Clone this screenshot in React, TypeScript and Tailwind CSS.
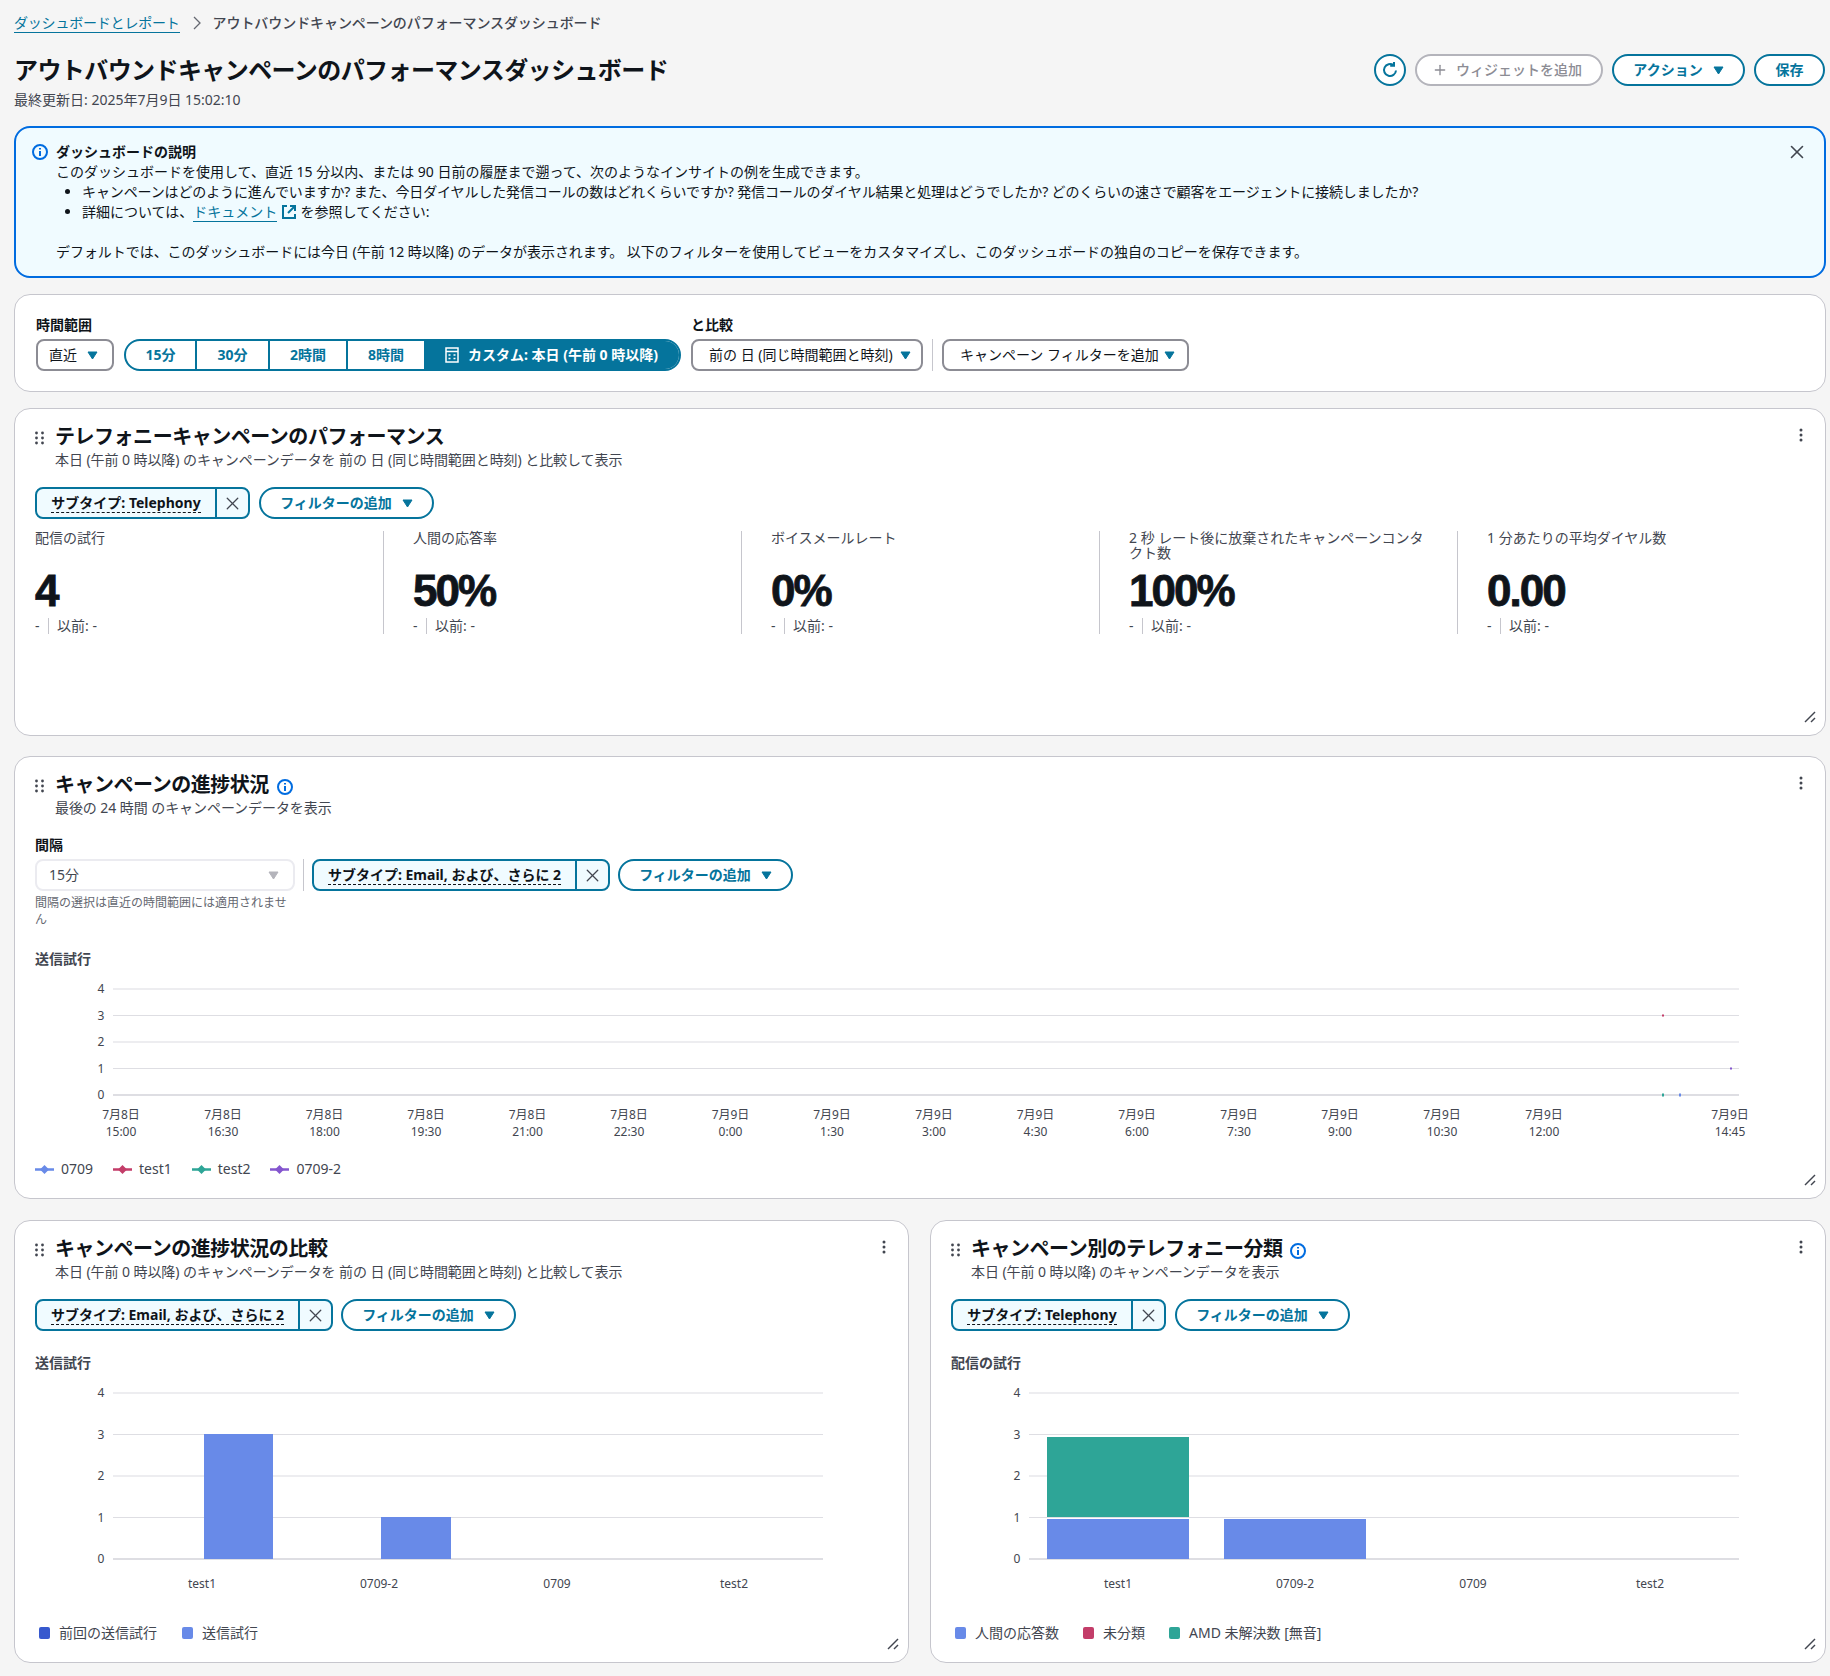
import { ReactNode } from "react";
import { Plus, X } from "lucide-react";

const teal = "#05749c";

const Caret = ({ className = "text-[#05749c]" }: { className?: string }) => (
  <svg width="11" height="9" viewBox="0 0 11 9" className={className}>
    <path d="M1 1h9L5.5 8z" fill="currentColor" stroke="currentColor" strokeLinejoin="round" />
  </svg>
);

const InfoIcon = ({ size = 16 }: { size?: number }) => (
  <svg width={size} height={size} viewBox="0 0 16 16" fill="none" stroke="#006ce0" strokeWidth="2" className="shrink-0">
    <circle cx="8" cy="8" r="7" />
    <path d="M8 7v5" />
    <path d="M8 4v1.6" />
  </svg>
);

const DragIcon = () => (
  <svg width="9" height="14" viewBox="0 0 9 14" fill="#424650" className="mt-[2px] shrink-0">
    <circle cx="1.5" cy="2" r="1.4" />
    <circle cx="7.5" cy="2" r="1.4" />
    <circle cx="1.5" cy="7" r="1.4" />
    <circle cx="7.5" cy="7" r="1.4" />
    <circle cx="1.5" cy="12" r="1.4" />
    <circle cx="7.5" cy="12" r="1.4" />
  </svg>
);

const ExternalIcon = () => (
  <svg width="16" height="16" viewBox="0 0 16 16" fill="none" stroke={teal} strokeWidth="2" className="inline-block align-[-3px]">
    <path d="M6 2H2v12h12v-4" />
    <path d="M9 2h5v5" />
    <path d="M14 2L7 9" />
  </svg>
);

const CalendarIcon = () => (
  <svg width="14" height="16" viewBox="0 0 14 16" fill="none" stroke="white" strokeWidth="1.5" className="shrink-0">
    <rect x="1" y="1" width="12" height="14" />
    <path d="M1 4.5h12" />
    <path d="M3.5 8h2M8.5 8h2M3.5 11.5h2M8.5 11.5h2" />
  </svg>
);

const PillButton = ({ children, className = "" }: { children: ReactNode; className?: string }) => (
  <button className={`flex h-8 items-center justify-center gap-[10px] rounded-full border-2 border-[#05749c] bg-white text-sm font-bold text-[#05749c] ${className}`}>
    {children}
  </button>
);

const Dropdown = ({ label, className = "" }: { label: string; className?: string }) => (
  <div className={`flex h-8 items-center justify-between rounded-lg border-2 border-[#8c8c94] bg-white text-sm text-[#0f141a] ${className}`}>
    <span>{label}</span>
    <Caret />
  </div>
);

const FilterChips = ({ label, chipClass, gapClass }: { label: string; chipClass: string; gapClass: string }) => (
  <div className={`flex ${gapClass}`}>
    <div className={`flex h-8 items-stretch rounded-lg border-2 border-[#05749c] bg-[#f0fbff] ${chipClass}`}>
      <div className="flex flex-1 items-center justify-center border-r-2 border-[#05749c]">
        <span className="border-b border-dashed border-[#0f141a] text-sm font-bold leading-[19px] text-[#0f141a]">{label}</span>
      </div>
      <div className="flex w-[31px] items-center justify-center">
        <X size={21} strokeWidth={1.5} color="#424650" />
      </div>
    </div>
    <PillButton className="w-[175px]">
      フィルターの追加
      <Caret />
    </PillButton>
  </div>
);

const Card = ({ title, sub, info, className = "", children }: { title: string; sub: string; info?: boolean; className?: string; children: ReactNode }) => (
  <section className={`relative rounded-2xl border border-[#c6c6cd] bg-white px-5 pt-[14px] ${className}`}>
    <div className="flex h-7 items-center">
      <DragIcon />
      <h2 className="ml-[11px] text-xl font-bold leading-7 tracking-[-0.47px] text-[#0f141a]">{title}</h2>
      {info && <span className="ml-2 mt-[3px]"><InfoIcon /></span>}
    </div>
    <p className="-mt-px ml-[20px] h-[21px] text-sm leading-5 tracking-[-0.07px] text-[#424650]">{sub}</p>
    {children}
    <svg width="4" height="14" viewBox="0 0 4 14" fill="#424650" className="absolute right-[22px] top-[19px]">
      <circle cx="2" cy="2" r="1.5" />
      <circle cx="2" cy="7" r="1.5" />
      <circle cx="2" cy="12" r="1.5" />
    </svg>
    <svg width="12" height="12" viewBox="0 0 12 12" fill="none" stroke="#424650" strokeWidth="1.5" className="absolute bottom-[12px] right-[9px]">
      <path d="M1 11L11 1" />
      <path d="M7 11l4-4" />
    </svg>
  </section>
);

const kpis = [
  { label: "配信の試行", value: "4" },
  { label: "人間の応答率", value: "50%" },
  { label: "ボイスメールレート", value: "0%" },
  { label: "2 秒 レート後に放棄されたキャンペーンコンタクト数", value: "100%" },
  { label: "1 分あたりの平均ダイヤル数", value: "0.00" },
];

const yTicks = [4, 3, 2, 1, 0];
const axisText = { fontSize: 12, fill: "#424650" };

const xLabels = [
  ["7月8日", "15:00", 121], ["7月8日", "16:30", 223], ["7月8日", "18:00", 324.5], ["7月8日", "19:30", 426],
  ["7月8日", "21:00", 527.5], ["7月8日", "22:30", 629], ["7月9日", "0:00", 730.5], ["7月9日", "1:30", 832],
  ["7月9日", "3:00", 934], ["7月9日", "4:30", 1035.5], ["7月9日", "6:00", 1137], ["7月9日", "7:30", 1239],
  ["7月9日", "9:00", 1340], ["7月9日", "10:30", 1442], ["7月9日", "12:00", 1544], ["7月9日", "14:45", 1730],
] as const;

const LineChart = () => {
  // coordinates are relative to the inner left edge of the card (x=35, y=975)
  const ys = [14, 40.5, 67, 93.5, 120];
  return (
    <svg width="1770" height="170" className="mt-[6px] block">
      {ys.map((y, i) => (
        <g key={y}>
          <line x1="78" x2="1704" y1={y} y2={y} stroke={i === 4 ? "#dedee3" : i % 2 ? "#dedee3" : "#ededf0"} strokeWidth={i % 2 ? 1 : 2} />
          <text x="66" y={y + 4} textAnchor="middle" {...axisText}>{yTicks[i]}</text>
        </g>
      ))}
      {xLabels.map(([d, t, x]) => (
        <g key={t}>
          <text x={x - 35} y="144" textAnchor="middle" {...axisText}>{d}</text>
          <text x={x - 35} y="161" textAnchor="middle" {...axisText}>{t}</text>
        </g>
      ))}
      <rect x="1627" y="39.5" width="2" height="2" fill="#c33d69" />
      <rect x="1695" y="92.5" width="2" height="2" fill="#8456ce" />
      <rect x="1627" y="118.5" width="2" height="3" fill="#2ea597" />
      <rect x="1644" y="118.5" width="2" height="3" fill="#688ae8" />
    </svg>
  );
};

const BarChart = ({ bars }: { bars: { x: number; w: number; top: number; bottom: number; color: string }[] }) => {
  const ys = [14, 55.5, 97, 138.5, 180];
  const cats: [string, number][] = [["test1", 167], ["0709-2", 344], ["0709", 522], ["test2", 699]];
  return (
    <svg width="852" height="221" className="mt-[6px] block">
      {ys.map((y, i) => (
        <g key={y}>
          <line x1="78" x2="788" y1={y} y2={y} stroke={i === 4 ? "#dedee3" : i % 2 ? "#dedee3" : "#ededf0"} strokeWidth={i % 2 ? 1 : 2} />
          <text x="66" y={y + 4} textAnchor="middle" {...axisText}>{yTicks[i]}</text>
        </g>
      ))}
      {bars.map((b) => (
        <rect key={`${b.x}-${b.top}`} x={b.x} y={b.top} width={b.w} height={b.bottom - b.top} fill={b.color} />
      ))}
      {cats.map(([c, x]) => (
        <text key={c} x={x} y="209" textAnchor="middle" {...axisText}>{c}</text>
      ))}
    </svg>
  );
};

const LineLegend = ({ color, label }: { color: string; label: string }) => (
  <div className="flex items-center gap-[7px] text-sm text-[#424650]">
    <svg width="19" height="9" viewBox="0 0 19 9">
      <rect x="0" y="3.25" width="19" height="2.5" fill={color} />
      <path d="M9.5 0L14 4.5L9.5 9L5 4.5z" fill={color} />
    </svg>
    {label}
  </div>
);

const SquareLegend = ({ color, label }: { color: string; label: string }) => (
  <div className="flex items-center gap-[9px] text-sm text-[#424650]">
    <span className={`h-3 w-[11px] rounded-[2px] ${color}`} />
    {label}
  </div>
);

export default function App() {
  return (
    <div className="min-h-[1676px] bg-[#f5f5f5] pb-[13px] pl-[14px] pr-[4px] pt-[13px] font-['Noto_Sans','Noto_Sans_CJK_JP',sans-serif]">
      <nav className="flex h-5 items-center text-sm leading-5">
        <a className="border-b border-[#05749c] leading-[19px] tracking-[-0.2px] text-[#05749c]">ダッシュボードとレポート</a>
        <svg width="10" height="14" viewBox="0 0 10 14" fill="none" stroke="#656871" strokeWidth="1.3" className="ml-3 mr-[11px]">
          <path d="M2 1l6 6-6 6" />
        </svg>
        <span className="font-medium tracking-[-0.08px] text-[#424650]">アウトバウンドキャンペーンのパフォーマンスダッシュボード</span>
      </nav>

      <header className="mt-[21px] flex items-start justify-between">
        <div>
          <h1 className="text-2xl font-bold leading-8 tracking-[-0.58px] text-[#0f141a]">アウトバウンドキャンペーンのパフォーマンスダッシュボード</h1>
          <p className="mt-1 text-sm leading-5 text-[#424650]">最終更新日: 2025年7月9日 15:02:10</p>
        </div>
        <div className="mr-px flex gap-[9px]">
          <button className="flex size-8 items-center justify-center rounded-full border-2 border-[#05749c] bg-white">
            <svg width="18" height="18" viewBox="0 0 18 18" fill="none" stroke={teal} strokeWidth="2">
              <path d="M15 9.5A6 6 0 1 1 12.6 4.2" />
              <path d="M13 1v3.8H9.2" />
            </svg>
          </button>
          <button className="flex h-8 w-[188px] items-center justify-center gap-2 rounded-full border-2 border-[#b4b4bb] bg-white pr-1 text-sm font-medium text-[#8c8c94]">
            <Plus size={16} strokeWidth={2} />
            ウィジェットを追加
          </button>
          <PillButton className="w-[133px]">
            アクション
            <Caret />
          </PillButton>
          <PillButton className="w-[71px]">保存</PillButton>
        </div>
      </header>

      <section className="relative mt-4 h-[152px] rounded-2xl border-2 border-[#006ce0] bg-[#f0fbff] pl-[16px] pt-[14px] text-sm leading-5 text-[#0f141a]">
        <div className="flex gap-2">
          <span className="mt-[2px]"><InfoIcon /></span>
          <div>
            <h3 className="font-bold">ダッシュボードの説明</h3>
            <p>このダッシュボードを使用して、直近 15 分以内、または 90 日前の履歴まで遡って、次のようなインサイトの例を生成できます。</p>
            <ul className="list-disc pl-[26px] [&>li]:h-5">
              <li className="tracking-[-0.12px]">キャンペーンはどのように進んでいますか? また、今日ダイヤルした発信コールの数はどれくらいですか? 発信コールのダイヤル結果と処理はどうでしたか? どのくらいの速さで顧客をエージェントに接続しましたか?</li>
              <li>詳細については、<a className="border-b border-[#05749c] text-[#05749c]">ドキュメント</a> <ExternalIcon /> を参照してください:</li>
            </ul>
            <p className="mt-5 tracking-[-0.05px]">デフォルトでは、このダッシュボードには今日 (午前 12 時以降) のデータが表示されます。 以下のフィルターを使用してビューをカスタマイズし、このダッシュボードの独自のコピーを保存できます。</p>
          </div>
        </div>
        <X size={22} strokeWidth={1.75} color="#424650" className="absolute right-[16px] top-[13px]" />
      </section>

      <section className="mt-4 flex h-[98px] items-end rounded-2xl border border-[#c6c6cd] bg-white pb-5 pl-[21px]">
        <div>
          <label className="block text-sm font-bold leading-5 text-[#0f141a]">時間範囲</label>
          <div className="mt-1 flex gap-[10px]">
            <Dropdown label="直近" className="w-[78px] pl-[11px] pr-[14px]" />
            <div className="flex h-8 w-[557px] overflow-hidden rounded-full border-2 border-[#05749c] bg-white text-sm font-bold text-[#05749c]">
              <span className="flex w-[71px] items-center justify-center border-r-2 border-[#05749c]">15分</span>
              <span className="flex w-[73px] items-center justify-center border-r-2 border-[#05749c]">30分</span>
              <span className="flex w-[78px] items-center justify-center border-r-2 border-[#05749c]">2時間</span>
              <span className="flex w-[76px] items-center justify-center">8時間</span>
              <span className="flex flex-1 items-center justify-center gap-[9px] bg-[#05749c] text-white">
                <CalendarIcon />
                カスタム: 本日 (午前 0 時以降)
              </span>
            </div>
          </div>
        </div>
        <div className="ml-[10px]">
          <label className="block text-sm font-bold leading-5 text-[#0f141a]">と比較</label>
          <Dropdown label="前の 日 (同じ時間範囲と時刻)" className="mt-1 w-[232px] pl-[16px] pr-[10px]" />
        </div>
        <div className="mx-[9px] h-8 w-px bg-[#c6c6cd]" />
        <Dropdown label="キャンペーン フィルターを追加" className="w-[247px] pl-[16px] pr-[12px]" />
      </section>

      <Card
        title="テレフォニーキャンペーンのパフォーマンス"
        sub="本日 (午前 0 時以降) のキャンペーンデータを 前の 日 (同じ時間範囲と時刻) と比較して表示"
        className="mt-4 h-[328px]"
      >
        <div className="mt-4">
          <FilterChips label="サブタイプ: Telephony" chipClass="w-[215px]" gapClass="gap-[9px]" />
        </div>
        <div className="mt-3 grid grid-cols-[348px_repeat(4,358px)]">
          {kpis.map((k, i) => (
            <div key={k.label} className={i > 0 ? "border-l border-[#c6c6cd] pl-[29px]" : ""}>
              <div className="-mt-px h-[39px] w-[296px] text-sm leading-[15px] text-[#424650]">{k.label}</div>
              <div className="h-11 font-['Liberation_Sans'] text-[44px] font-bold leading-[44px] tracking-[-2px] text-[#0f141a] [-webkit-text-stroke:0.8px_#0f141a]">{k.value}</div>
              <div className="mt-[5px] flex h-4 items-center text-sm text-[#424650]">
                <span className="w-[13px]">-</span>
                <span className="mr-2 h-4 w-px bg-[#c6c6cd]" />
                以前: -
              </div>
            </div>
          ))}
        </div>
      </Card>

      <Card
        title="キャンペーンの進捗状況"
        sub="最後の 24 時間 のキャンペーンデータを表示"
        info
        className="mt-5 h-[443px]"
      >
        <div className="mt-4 flex items-start">
          <div className="w-[260px]">
            <label className="block text-sm font-bold leading-5 text-[#0f141a]">間隔</label>
            <div className="mt-1 flex h-8 items-center justify-between rounded-lg border-2 border-[#ebebf0] bg-white pl-[12px] pr-[14px] text-sm text-[#424650]">
              15分
              <Caret className="text-[#b4b4bb]" />
            </div>
            <p className="mt-[3px] text-xs leading-[17px] text-[#656871]">間隔の選択は直近の時間範囲には適用されません</p>
          </div>
          <div className="ml-2 mt-6 h-8 w-px bg-[#c6c6cd]" />
          <div className="ml-2 mt-6">
            <FilterChips label="サブタイプ: Email, および、さらに 2" chipClass="w-[298px]" gapClass="gap-2" />
          </div>
        </div>
        <h4 className="mt-[21px] text-sm font-bold leading-5 text-[#424650]">送信試行</h4>
        <LineChart />
        <div className="mt-[14px] flex h-5 gap-5">
          <LineLegend color="#688ae8" label="0709" />
          <LineLegend color="#c33d69" label="test1" />
          <LineLegend color="#2ea597" label="test2" />
          <LineLegend color="#8456ce" label="0709-2" />
        </div>
      </Card>

      <div className="mt-[21px] grid grid-cols-[895px_896px] gap-[21px]">
        <Card
          title="キャンペーンの進捗状況の比較"
          sub="本日 (午前 0 時以降) のキャンペーンデータを 前の 日 (同じ時間範囲と時刻) と比較して表示"
          className="h-[443px]"
        >
          <div className="mt-4">
            <FilterChips label="サブタイプ: Email, および、さらに 2" chipClass="w-[298px]" gapClass="gap-2" />
          </div>
          <h4 className="mt-[22px] text-sm font-bold leading-5 text-[#424650]">送信試行</h4>
          <BarChart
            bars={[
              { x: 169, w: 69, top: 55, bottom: 180, color: "#688ae8" },
              { x: 346, w: 70, top: 138, bottom: 180, color: "#688ae8" },
            ]}
          />
          <div className="mt-[23px] flex h-5 gap-[25px] pl-1">
            <SquareLegend color="bg-[#3759ce]" label="前回の送信試行" />
            <SquareLegend color="bg-[#688ae8]" label="送信試行" />
          </div>
        </Card>
        <Card
          title="キャンペーン別のテレフォニー分類"
          sub="本日 (午前 0 時以降) のキャンペーンデータを表示"
          info
          className="h-[443px]"
        >
          <div className="mt-4">
            <FilterChips label="サブタイプ: Telephony" chipClass="w-[215px]" gapClass="gap-[9px]" />
          </div>
          <h4 className="mt-[22px] text-sm font-bold leading-5 text-[#424650]">配信の試行</h4>
          <BarChart
            bars={[
              { x: 96, w: 142, top: 58, bottom: 138, color: "#2ea597" },
              { x: 96, w: 142, top: 140, bottom: 180, color: "#688ae8" },
              { x: 273, w: 142, top: 140, bottom: 180, color: "#688ae8" },
            ]}
          />
          <div className="mt-[23px] flex h-5 gap-[24px] pl-1">
            <SquareLegend color="bg-[#688ae8]" label="人間の応答数" />
            <SquareLegend color="bg-[#c33d69]" label="未分類" />
            <SquareLegend color="bg-[#2ea597]" label="AMD 未解決数 [無音]" />
          </div>
        </Card>
      </div>
    </div>
  );
}
